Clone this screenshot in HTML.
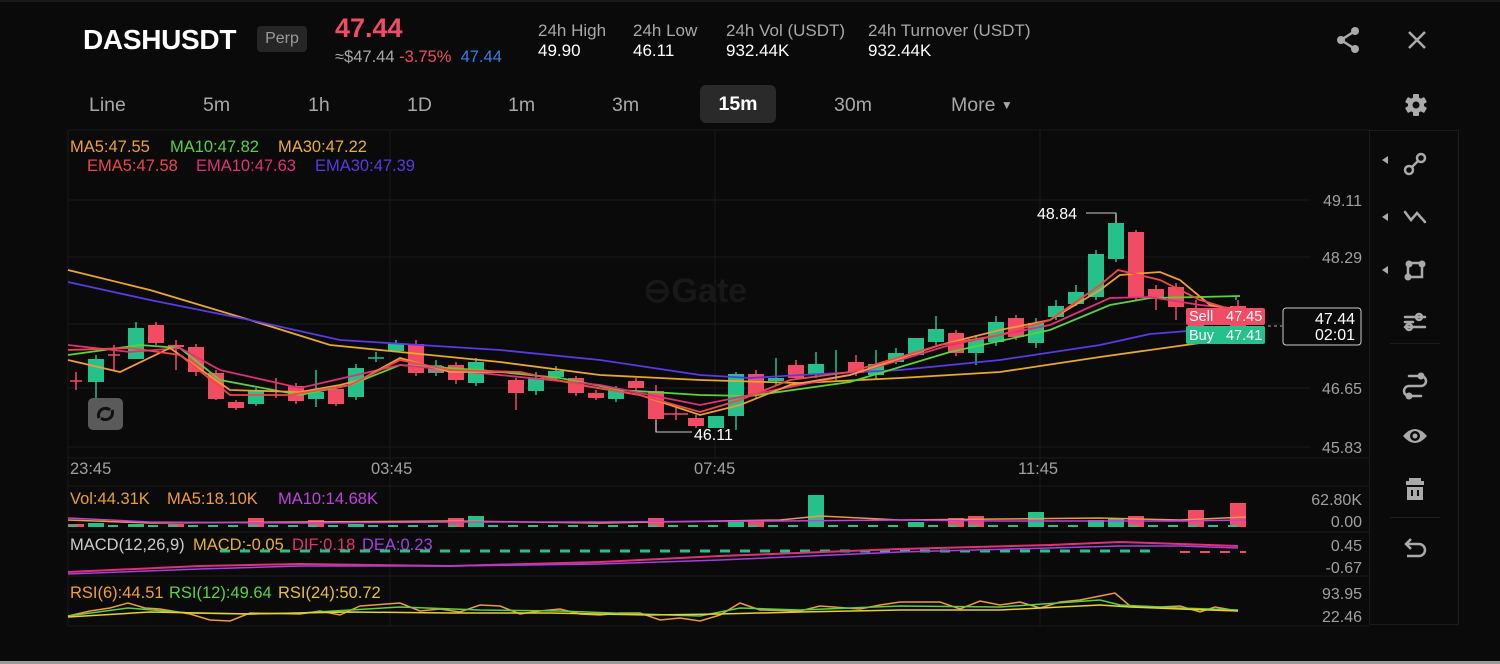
<!DOCTYPE html>
<html><head><meta charset="utf-8"><style>
*{margin:0;padding:0;box-sizing:border-box}
body{width:1500px;height:664px;background:#0a0a0a;overflow:hidden;font-family:"Liberation Sans",sans-serif;position:relative;color:#fff}
.a{position:absolute;white-space:nowrap}
.g{color:#a8a8a8}
.tab{position:absolute;top:94px;font-size:19.5px;color:#a8a8a8}
</style></head><body>
<div style="position:absolute;left:0;top:0;width:1500px;height:2px;background:#1a1a1a"></div>
<div style="position:absolute;left:0;top:661px;width:1500px;height:3px;background:#9a9a9a"></div>

<div class="a" style="left:83px;top:24px;font-size:28px;font-weight:bold;letter-spacing:-0.3px">DASHUSDT</div>
<div class="a" style="left:257px;top:26px;width:50px;height:26px;background:#262626;border-radius:4px;color:#9a9a9a;font-size:16px;line-height:26px;text-align:center">Perp</div>
<div class="a" style="left:335px;top:13px;font-size:27px;font-weight:bold;color:#f24b64">47.44</div>
<div class="a" style="left:335px;top:48px;font-size:16.5px"><span class="g">≈$47.44</span> <span style="color:#f24b64">-3.75%</span> &nbsp;<span style="color:#3b7ee6">47.44</span></div>
<div class="a g" style="left:538px;top:21px;font-size:17px">24h High</div>
<div class="a" style="left:538px;top:41px;font-size:17px">49.90</div>
<div class="a g" style="left:633px;top:21px;font-size:17px">24h Low</div>
<div class="a" style="left:633px;top:41px;font-size:17px">46.11</div>
<div class="a g" style="left:726px;top:21px;font-size:17px">24h Vol (USDT)</div>
<div class="a" style="left:726px;top:41px;font-size:17px">932.44K</div>
<div class="a g" style="left:868px;top:21px;font-size:17px">24h Turnover (USDT)</div>
<div class="a" style="left:868px;top:41px;font-size:17px">932.44K</div>

<svg class="a" style="left:1330px;top:22px" width="100" height="36" viewBox="0 0 100 36">
<g fill="#aaa"><circle cx="25" cy="9" r="4"/><circle cx="25" cy="27" r="4"/><circle cx="11" cy="18" r="4"/></g>
<path d="M25 9L11 18L25 27" stroke="#aaa" stroke-width="2.5" fill="none"/>
<path d="M79 10L95 26M95 10L79 26" stroke="#aaa" stroke-width="2.5"/>
</svg>

<div class="tab" style="left:89px">Line</div>
<div class="tab" style="left:203px">5m</div>
<div class="tab" style="left:308px">1h</div>
<div class="tab" style="left:407px">1D</div>
<div class="tab" style="left:508px">1m</div>
<div class="tab" style="left:612px">3m</div>
<div class="a" style="left:700px;top:85px;width:76px;height:38px;background:#2a2a2a;border-radius:6px;color:#fff;font-size:19.5px;font-weight:bold;text-align:center;line-height:38px">15m</div>
<div class="tab" style="left:834px">30m</div>
<div class="tab" style="left:951px">More <span style="font-size:12px;position:relative;top:-2px">▼</span></div>
<svg class="a" style="left:1403px;top:92px" width="26" height="26" viewBox="0 0 26 26">
<g fill="#aaa" transform="translate(13 13)"><circle r="8"/><rect x="-3" y="-11" width="6" height="22" rx="1"/><rect x="-3" y="-11" width="6" height="22" rx="1" transform="rotate(60)"/><rect x="-3" y="-11" width="6" height="22" rx="1" transform="rotate(120)"/></g>
<circle cx="13" cy="13" r="3.5" fill="#0a0a0a"/>
</svg>

<div class="a" style="left:1369px;top:130px;width:90px;height:495px;border:1px solid #1c1c1c"></div>
<div class="a" style="left:1390px;top:343px;width:50px;height:1px;background:#1e1e1e"></div>
<div class="a" style="left:1390px;top:517px;width:50px;height:1px;background:#1e1e1e"></div>
<svg class="a" style="left:1375px;top:140px" width="80" height="430" viewBox="0 0 80 430">
<g fill="#aaa"><path d="M7 20l6-4v8z"/><path d="M7 77l6-4v8z"/><path d="M7 130l6-4v8z"/></g>
<g stroke="#aaa" stroke-width="2.5" fill="none" stroke-linecap="round">
<circle cx="34" cy="30" r="4"/><circle cx="46" cy="18" r="4"/><path d="M37 27l6-6"/>
<path d="M30 72l6 8 6-7 8 9"/>
<path d="M33 123h14v14H33z"/>
<path d="M30 177h20M30 187h20M30 182h8"/><circle cx="44" cy="177" r="3"/><circle cx="34" cy="187" r="3"/>
<path d="M34 236h12a5 5 0 0 1 0 10H34a5 5 0 0 0 0 10h12"/>
</g>
<g fill="#aaa"><circle cx="34" cy="124" r="3.5"/><circle cx="47" cy="124" r="3.5"/><circle cx="33" cy="137" r="3.5"/>
<circle cx="46" cy="236" r="3.5"/><circle cx="34" cy="256" r="3.5"/>
<path d="M28 296q12-14 24 0q-12 14-24 0z"/>
<rect x="31" y="341" width="18" height="4"/><rect x="34" y="338" width="12" height="3"/><rect x="32" y="347" width="16" height="13"/>
</g>
<circle cx="40" cy="296" r="5" fill="#0a0a0a"/><circle cx="40" cy="296" r="2.5" fill="#aaa"/>
<g fill="#0a0a0a"><rect x="36" y="350" width="2" height="6"/><rect x="42" y="350" width="2" height="6"/></g>
<path d="M32 404h12a6 6 0 0 1 0 12H32M36 399l-5 5 5 5" stroke="#aaa" stroke-width="2.5" fill="none"/>
</svg>

<svg class="a" style="left:0;top:0" width="1370" height="664" viewBox="0 0 1370 664">
<g stroke="#1a1a1a" stroke-width="1">
<path d="M68 130H1370M68 200H1310M68 257H1310M68 324H1310M68 388H1310M68 447H1310M68 458H1370M68 486H1370M68 532H1370M68 576H1370M68 626H1370"/>
<path d="M390 130V626M715 130V458M1040 130V626M68 130V626"/>
</g>
<text x="643" y="302" font-size="34" font-weight="bold" fill="#181818" font-family="Liberation Sans">⊖Gate</text>
<g font-size="16.5" font-family="Liberation Sans">
<text x="70" y="152" fill="#f0a030">MA5:47.55</text><text x="170" y="152" fill="#5ad23c">MA10:47.82</text><text x="278" y="152" fill="#e8b030">MA30:47.22</text>
<text x="87" y="171" fill="#e84848">EMA5:47.58</text><text x="196" y="171" fill="#e03078">EMA10:47.63</text><text x="315" y="171" fill="#5a3ae0">EMA30:47.39</text>
<text x="70" y="474" fill="#a0a0a0">23:45</text><text x="371" y="474" fill="#a0a0a0">03:45</text><text x="694" y="474" fill="#a0a0a0">07:45</text><text x="1018" y="474" fill="#a0a0a0">11:45</text>
<text x="70" y="504" fill="#e8a030">Vol:44.31K</text><text x="167" y="504" fill="#f09a3a">MA5:18.10K</text><text x="278" y="504" fill="#c040e0">MA10:14.68K</text>
<text x="70" y="550" fill="#ccc">MACD(12,26,9)</text><text x="193" y="550" fill="#e8b030">MACD:-0.05</text><text x="292" y="550" fill="#e03078">DIF:0.18</text><text x="362" y="550" fill="#a040e0">DEA:0.23</text>
<text x="70" y="598" fill="#f0a030">RSI(6):44.51</text><text x="169" y="598" fill="#5ad23c">RSI(12):49.64</text><text x="278" y="598" fill="#e8c030">RSI(24):50.72</text>
</g>
<g font-size="16" fill="#a0a0a0" font-family="Liberation Sans" text-anchor="end">
<text x="1362" y="206">49.11</text><text x="1362" y="263">48.29</text><text x="1362" y="394">46.65</text><text x="1362" y="453">45.83</text>
<text x="1362" y="505">62.80K</text><text x="1362" y="527">0.00</text><text x="1362" y="551">0.45</text><text x="1362" y="573">-0.67</text>
<text x="1362" y="599">93.95</text><text x="1362" y="622">22.46</text>
</g>
<g stroke-width="1.5">
<g stroke="#26c08a"><path d="M96 355V400M136 322V359M256 388V406M316 370V407M356 364V400M376 352V362M396 340V352M476 358V386M536 372V395M556 366V380M616 386V402M736 372V430M776 358V385M816 352V378M836 350V380M876 350V380M896 348V364M936 316V345M976 335V365M996 316V346M1036 318V348M1056 300V320M1076 285V306M1096 250V300M1116 214V262M1236 296V300"/><path d="M430 366H442M436 360V376M368 358H384"/></g>
<g stroke="#f24b64"><path d="M70 381H82M76 372V390M108 355H120M114 345V370M156 322V345M176 340V370M196 344V376M216 370V400M236 400V410M276 378V398M296 383V404M336 386V406M416 340V376M456 362V384M516 378V410M576 376V396M596 390V400M636 378V390M656 385V432M676 408V420M696 415V428M756 370V398M796 360V380M856 355V376M956 330V356M1016 315V340M1136 230V300M1156 285V310M1176 283V320M1196 300V318M1238 300V335M664 414H688"/></g>
</g>
<g fill="#26c08a">
<rect x="88" y="359" width="16" height="23"/><rect x="128" y="328" width="16" height="31"/><rect x="248" y="391" width="16" height="13"/><rect x="308" y="392" width="16" height="7"/><rect x="348" y="368" width="16" height="29"/><rect x="388" y="344" width="16" height="7"/><rect x="468" y="362" width="16" height="21"/><rect x="528" y="378" width="16" height="13"/><rect x="548" y="371" width="16" height="6"/><rect x="608" y="390" width="16" height="9"/><rect x="708" y="416" width="16" height="12"/><rect x="728" y="374" width="16" height="42"/><rect x="768" y="378" width="16" height="3"/><rect x="808" y="364" width="16" height="10"/><rect x="868" y="364" width="16" height="11"/><rect x="888" y="353" width="16" height="9"/><rect x="908" y="338" width="16" height="17"/><rect x="928" y="329" width="16" height="13"/><rect x="968" y="339" width="16" height="14"/><rect x="988" y="322" width="16" height="20"/><rect x="1028" y="323" width="16" height="20"/><rect x="1048" y="306" width="16" height="11"/><rect x="1068" y="292" width="16" height="12"/><rect x="1088" y="254" width="16" height="43"/><rect x="1108" y="223" width="16" height="36"/>
</g>
<rect x="428" y="366" width="16" height="7" fill="#888"/>
<g fill="#f24b64">
<rect x="148" y="325" width="16" height="18"/><rect x="168" y="345" width="16" height="2"/><rect x="188" y="347" width="16" height="25"/><rect x="208" y="373" width="16" height="26"/><rect x="228" y="402" width="16" height="6"/><rect x="288" y="386" width="16" height="15"/><rect x="328" y="389" width="16" height="15"/><rect x="408" y="344" width="16" height="29"/><rect x="448" y="365" width="16" height="15"/><rect x="508" y="380" width="16" height="13"/><rect x="568" y="378" width="16" height="15"/><rect x="588" y="393" width="16" height="5"/><rect x="628" y="381" width="16" height="7"/><rect x="648" y="391" width="16" height="28"/><rect x="688" y="418" width="16" height="8"/><rect x="748" y="374" width="16" height="21"/><rect x="788" y="365" width="16" height="13"/><rect x="848" y="362" width="16" height="11"/><rect x="948" y="333" width="16" height="20"/><rect x="1008" y="318" width="16" height="19"/><rect x="1128" y="232" width="16" height="65"/><rect x="1148" y="289" width="16" height="8"/><rect x="1168" y="287" width="16" height="20"/><rect x="1188" y="310" width="16" height="25"/><rect x="1230" y="306" width="16" height="24"/>
</g>
<g fill="none" stroke-width="1.8">
<polyline stroke="#e8a828" points="68,270 150,290 250,320 330,345 400,352 500,362 600,375 700,380 800,383 900,378 1000,372 1100,357 1200,343 1240,338"/>
<polyline stroke="#5a3ae8" points="68,282 150,300 250,320 340,340 420,345 500,350 600,360 700,375 750,378 800,375 900,370 1000,360 1100,345 1150,334 1200,330 1240,328"/>
<polyline stroke="#5ad23c" points="68,355 140,345 180,348 220,380 300,395 350,385 400,365 480,370 560,378 620,390 700,395 750,396 850,382 950,352 1050,330 1110,305 1150,298 1200,297 1240,296"/>
<polyline stroke="#e03078" points="68,345 130,352 180,348 220,370 300,388 400,365 500,375 600,385 700,405 750,395 850,375 950,345 1050,325 1110,298 1150,297 1200,305 1230,308"/>
<polyline stroke="#f09a3a" points="68,360 120,372 170,348 230,390 300,392 340,385 360,380 400,358 450,372 520,372 580,385 640,395 700,415 740,405 790,385 850,375 940,345 1000,330 1050,320 1100,290 1120,275 1160,272 1180,280 1210,305 1240,310"/>
<polyline stroke="#f04848" points="68,350 130,348 180,355 230,395 290,395 350,385 400,360 450,370 520,372 580,385 640,395 700,412 740,400 790,380 850,372 940,345 1000,335 1050,320 1100,285 1118,270 1160,280 1200,300 1240,312"/>
</g>
<path d="M1086 213H1116V223" stroke="#ccc" fill="none"/>
<text x="1037" y="219" font-size="16" fill="#fff" font-family="Liberation Sans">48.84</text>
<path d="M656 420V432H692" stroke="#ccc" fill="none"/>
<text x="694" y="440" font-size="16" fill="#fff" font-family="Liberation Sans">46.11</text>
<rect x="1186" y="308" width="79" height="17" rx="2" fill="#f24b64"/>
<rect x="1186" y="326" width="79" height="18" rx="2" fill="#26c08a"/>
<g font-size="14.5" fill="#fff" font-family="Liberation Sans"><text x="1189" y="321">Sell</text><text x="1226" y="321">47.45</text><text x="1189" y="340">Buy</text><text x="1226" y="340">47.41</text></g>
<path d="M1268 326H1282" stroke="#aaa" stroke-dasharray="3 3"/>
<rect x="1283" y="308" width="78" height="37" rx="3" fill="#0a0a0a" stroke="#ccc"/>
<g font-size="16" fill="#fff" font-family="Liberation Sans" text-anchor="end"><text x="1355" y="324">47.44</text><text x="1355" y="340">02:01</text></g>
<rect x="88" y="398" width="35" height="32" rx="5" fill="#5a5a5a"/>
<path d="M99 418a7 7 0 0 1 11-8M112 410a7 7 0 0 1-11 8" stroke="#111" stroke-width="3" fill="none"/>
<g fill="#26c08a"><rect x="88" y="523" width="16" height="4"/><rect x="128" y="524" width="16" height="3"/><rect x="348" y="524" width="16" height="3"/><rect x="468" y="516" width="16" height="11"/><rect x="728" y="520" width="16" height="7"/><rect x="808" y="495" width="16" height="32"/><rect x="908" y="522" width="16" height="5"/><rect x="1028" y="512" width="16" height="15"/><rect x="1088" y="520" width="16" height="7"/><rect x="1108" y="518" width="16" height="9"/></g>
<g fill="#f24b64"><rect x="68" y="524" width="16" height="3"/><rect x="168" y="524" width="16" height="3"/><rect x="248" y="518" width="16" height="9"/><rect x="308" y="520" width="16" height="7"/><rect x="448" y="518" width="16" height="9"/><rect x="648" y="518" width="16" height="9"/><rect x="748" y="520" width="16" height="7"/><rect x="948" y="518" width="16" height="9"/><rect x="968" y="516" width="16" height="11"/><rect x="1128" y="516" width="16" height="11"/><rect x="1188" y="510" width="16" height="17"/><rect x="1230" y="503" width="16" height="24"/></g>
<path d="M68 526H1246" stroke="#26c08a" stroke-width="2" stroke-dasharray="10 10"/>
<polyline fill="none" stroke="#f09a3a" stroke-width="1.5" points="68,520 150,523 300,522 450,521 600,523 780,520 820,516 900,520 1000,519 1100,518 1180,520 1246,517"/>
<polyline fill="none" stroke="#c040e0" stroke-width="1.5" points="68,518 150,522 300,523 450,522 600,522 780,521 900,520 1000,521 1100,521 1180,521 1246,520"/>
<path d="M220 551H1150" stroke="#26c08a" stroke-width="3" stroke-dasharray="10 10"/>
<path d="M1180 552H1246" stroke="#f24b64" stroke-width="2" stroke-dasharray="10 10"/>
<polyline fill="none" stroke="#e03078" stroke-width="2" points="68,572 200,566 300,564 450,566 600,562 720,556 900,549 1050,545 1120,542 1180,544 1238,546"/>
<polyline fill="none" stroke="#a040e0" stroke-width="1.5" points="68,574 200,569 300,566 450,566 600,564 720,560 900,552 1050,548 1120,546 1180,546 1238,548"/>
<polyline fill="none" stroke="#f09a3a" stroke-width="1.5" points="68,616 90,611 110,608 128,603 145,608 160,609 190,614 210,620 230,621 250,613 300,614 320,611 340,615 360,606 400,603 420,611 440,609 460,612 480,605 500,606 520,614 540,611 560,609 580,614 600,615 620,613 640,613 660,620 680,618 700,621 720,615 740,603 760,610 800,611 820,606 860,609 880,605 900,602 940,602 960,609 980,601 1000,605 1020,602 1040,608 1060,602 1080,600 1100,596 1115,593 1130,606 1160,607 1180,606 1200,612 1215,607 1238,611"/>
<polyline fill="none" stroke="#5ad23c" stroke-width="1.5" points="68,616 128,608 190,613 250,614 300,613 400,607 480,610 560,611 640,614 700,616 740,608 800,610 900,606 1000,607 1100,600 1120,605 1180,608 1238,610"/>
<polyline fill="none" stroke="#e8d030" stroke-width="1.5" points="68,617 150,612 250,614 350,612 450,613 550,613 650,615 720,614 800,612 900,610 1000,610 1100,605 1130,607 1180,609 1238,611"/>
</svg>
</body></html>
